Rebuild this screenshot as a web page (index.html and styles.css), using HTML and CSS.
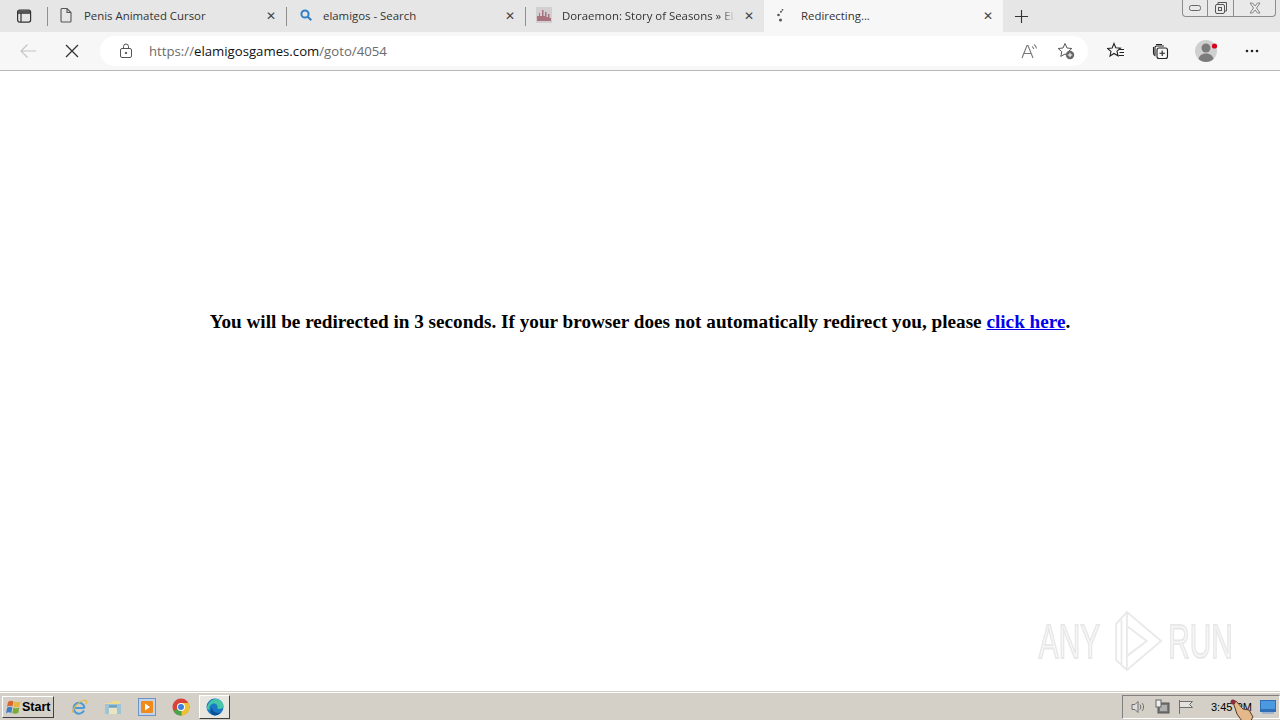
FILE: index.html
```html
<!DOCTYPE html>
<html lang="en">
<head>
	<meta charset="UTF-8" />
	<title>Redirecting...</title>
	<link rel="stylesheet" href="styles.css">
</head>
<body>
	<div class="tabstrip">
		<div class="tab-menu">
			<svg width="16" height="16" viewBox="0 0 16 16" fill="none" stroke="#333" stroke-width="1.2"><rect x="1.6" y="2.1" width="13" height="12" rx="2"/><path d="M1.6 5.2h13M5 5.2v8.9"/><path d="M2 2.6h12v2.4H2z" fill="#555" stroke="none"/></svg>
		</div>
		<div class="tab">
			<svg class="fav" width="16" height="16" viewBox="0 0 16 16" fill="none" stroke="#555" stroke-width="1.1"><path d="M3 2.5a1 1 0 0 1 1-1h5l4 4v8.500a1 1 0 0 1-1 1H4a1 1 0 0 1-1-1zM9 1.500v4h4"/></svg>
			<span class="tab-title">Penis Animated Cursor</span>
			<span class="tab-close">&#10005;</span>
		</div>
		<div class="tab">
			<svg class="fav fav-search" width="16" height="16" viewBox="0 0 16 16" fill="none" stroke="#2f7fc4" stroke-width="2"><circle cx="7" cy="7" r="3.600"/><path d="M9.800 9.800l3.500 3.500"/></svg>
			<span class="tab-title">elamigos - Search</span>
			<span class="tab-close">&#10005;</span>
		</div>
		<div class="tab">
			<svg class="fav" width="16" height="16" viewBox="0 0 16 16"><rect width="16" height="16" fill="#d3ced0"/><path d="M1 14V9h2V6h1v3h2V3h1.500v6H9V5h1.500v5H12V7h1.500v4H15v3z" fill="#a8727f"/></svg>
			<span class="tab-title tab-fade">Doraemon: Story of Seasons » ElA</span>
			<span class="tab-close">&#10005;</span>
		</div>
		<div class="tab tab-active">
			<svg class="fav" width="16" height="16" viewBox="0 0 16 16" fill="#555"><circle cx="7.500" cy="13" r="1.500"/><circle cx="5.500" cy="8" r="1.300"/><circle cx="8" cy="4.800" r="1"/><circle cx="9.500" cy="2.800" r="0.900"/></svg>
			<span class="tab-title">Redirecting...</span>
			<span class="tab-close">&#10005;</span>
		</div>
		<div class="tab-new">
			<svg width="15" height="15" viewBox="0 0 16 16" stroke="#333" stroke-width="1.200"><path d="M8 1v14M1 8h14"/></svg>
		</div>
		<div class="win-controls">
			<div class="win-btn win-min"><svg width="14" height="8" viewBox="0 0 14 8" fill="none" stroke="#666"><rect x="1.500" y="1.500" width="11" height="5" rx="2"/></svg></div>
			<div class="win-btn win-max"><svg width="14" height="14" viewBox="0 0 14 14" fill="none" stroke="#555"><rect x="1.500" y="3.500" width="9" height="9" rx="1.500"/><path d="M4 3.500V1.500h8.500v8.500h-2"/><rect x="4.500" y="6.500" width="3" height="3"/></svg></div>
			<div class="win-btn win-close"><svg width="14" height="12" viewBox="0 0 14 12" fill="none" stroke="#888"><path d="M2 1h2.500L7 4l2.500-3H12L8.500 6 12 11H9.500L7 8l-2.500 3H2l3.500-5z"/></svg></div>
		</div>
	</div>

	<div class="toolbar">
		<div class="nav-btn nav-back">
			<svg width="18" height="16" viewBox="0 0 18 16" fill="none" stroke="#c4c4c4" stroke-width="1.200"><path d="M17 8H2M8.500 1.500L2 8l6.500 6.500"/></svg>
		</div>
		<div class="nav-btn nav-stop">
			<svg width="14" height="14" viewBox="0 0 14 14" fill="none" stroke="#333" stroke-width="1.300"><path d="M1 1l12 12M13 1L1 13"/></svg>
		</div>
		<div class="urlbar">
			<svg class="lock" width="14" height="16" viewBox="0 0 14 16" fill="none" stroke="#555"><rect x="1.500" y="5.500" width="11" height="9" rx="1.500"/><path d="M4.500 5.500V3.500a2.500 2.500 0 0 1 5 0v2"/><circle cx="7" cy="10" r="0.800" fill="#555"/></svg>
			<span class="url"><span class="url-dim">https://</span>elamigosgames.com<span class="url-dim">/goto/4054</span></span>
			<svg class="url-icon" width="18" height="16" viewBox="0 0 18 16" fill="none" stroke="#777" stroke-width="1.100"><path d="M1 15L6 2.500h1L12 15M3 10.500h7"/><path d="M11 3.500c1 .5 1.500 1.300 1.700 2.500M13 1.500c1.500 1 2.300 2.300 2.500 4"/></svg>
			<svg class="url-icon url-fav" width="18" height="18" viewBox="0 0 18 18"><path d="M8 1.500l2 4.500 4.800.5-3.600 3.200 1 4.700L8 12l-4.200 2.400 1-4.700L1.200 6.500 6 6z" fill="none" stroke="#555"/><circle cx="13" cy="13" r="4.200" fill="#666"/><path d="M13 10.800v4.400M10.800 13h4.400" stroke="#fff"/></svg>
		</div>
		<div class="tool-icons">
			<svg width="18" height="18" viewBox="0 0 18 18" fill="none" stroke="#222" stroke-width="1.100"><path d="M7 1.500l1.800 4.300 4.700.4-3.500 3 1 4.600L7 11.500l-4 2.500 1-4.600-3.500-3 4.700-.4z"/><path d="M12 7.500h5M12.500 10.500h4.500M11.500 13.500h5.500"/></svg>
			<svg width="18" height="18" viewBox="0 0 18 18" fill="none" stroke="#222" stroke-width="1.100"><path d="M5 2.500h6M2.500 5v6c0 1.500.5 2.500 2 3"/><path d="M4 13V5.500A1.500 1.500 0 0 1 5.500 4H13"/><rect x="6" y="6" width="10.500" height="10.500" rx="2"/><path d="M11.200 8.500v5.500M8.500 11.200H14"/></svg>
			<div class="avatar">
				<svg width="24" height="24" viewBox="0 0 24 24"><circle cx="12" cy="12" r="11" fill="#d0d0d0"/><circle cx="12" cy="9" r="4.500" fill="#7b7b7b"/><path d="M4.500 20c1-4 4-5.500 7.500-5.500s6.500 1.500 7.500 5.500c-2 2-4.500 3-7.500 3s-5.500-1-7.500-3z" fill="#7b7b7b"/><circle cx="20.500" cy="7" r="2.600" fill="#d9001b"/></svg>
			</div>
			<svg width="14" height="4" viewBox="0 0 14 4" fill="#222"><circle cx="2" cy="2" r="1.300"/><circle cx="7" cy="2" r="1.300"/><circle cx="12" cy="2" r="1.300"/></svg>
		</div>
	</div>

	<div class="page">
		<h3 class="redirect">You will be redirected in 3 seconds. If your browser does not automatically redirect you, please <a href="#">click here</a>.</h3>
		<div class="watermark">
			<span>ANY</span>
			<svg class="wm-logo" width="90" height="62" viewBox="0 0 62 62" preserveAspectRatio="none" fill="none" stroke="#e9e9e9" stroke-width="2"><path d="M8 14L20 2l38 29-38 29-12-10z"/><path d="M14 10v44M20 2v58M20 16l22 15-22 15z"/></svg>
			<span>RUN</span>
		</div>
	</div>

	<div class="taskbar">
		<div class="start">
			<svg width="16" height="16" viewBox="0 0 16 16"><path d="M2 3c2-1.500 3.500-1.500 5.500-.5l-1 5C4.500 6.500 3 6.500 1 8z" fill="#d9662c"/><path d="M8.500 2.500c2 1 3.500 1 6 0l-1 5c-2.500 1-4 1-6 0z" fill="#e7b53a"/><path d="M1 9c2-1.500 3.500-1.500 5.300-.5l-1 5.500c-2-1-3.500-1-5.300.5z" fill="#3f7dc4"/><path d="M7.300 8.500c2 1 3.500 1 6 0l-1 5.500c-2.500 1-4 1-6 0z" fill="#7bab3a"/></svg>
			<span>Start</span>
		</div>
		<div class="quick">
			<svg width="18" height="18" viewBox="0 0 18 18" fill="none"><path d="M3.500 10H14.500M14 12.500A5.500 5.500 0 1 1 14.500 10" stroke="#4a9bd8" stroke-width="2"/><path d="M3 15C1 12 9 3 15 2c2 0 2 2 1 4" stroke="#e5b84a" stroke-width="1.200"/></svg>
			<svg width="18" height="18" viewBox="0 0 18 18"><path d="M1 5h6l1-2h8v4H1z" fill="#f0dc8e"/><rect x="1" y="6" width="16" height="10" fill="#9fc4d6"/><rect x="5" y="10" width="8" height="6" fill="#e9e4c2"/><rect x="5" y="7" width="8" height="2.500" fill="#6fa4c4"/></svg>
			<svg width="18" height="18" viewBox="0 0 18 18"><rect x="0.500" y="0.500" width="17" height="17" fill="#c3d4ea" stroke="#6f93c4"/><rect x="3" y="3" width="12" height="12" rx="1" fill="#ef8a1d"/><path d="M7 5.500l5 3.500-5 3.500z" fill="#fff"/></svg>
			<svg width="18" height="18" viewBox="0 0 18 18"><circle cx="9" cy="9" r="8.500" fill="#d9433a"/><path d="M9 9L1.500 13a8.500 8.500 0 0 0 8 4.500z" fill="#4aa24a"/><path d="M9 5h7.600a8.500 8.500 0 0 1-7 12.500z" fill="#edc232"/><circle cx="9" cy="9" r="4" fill="#fff"/><circle cx="9" cy="9" r="3" fill="#3f7fd9"/></svg>
			<div class="task-active">
				<svg width="18" height="18" viewBox="0 0 18 18"><circle cx="9" cy="9" r="8.500" fill="#1a78c4"/><path d="M1 11C1 5 6 1 10 1c4 0 7.500 3 7.500 7 0 2-2 3-4 3-1.500 0-2.500-.5-2-1.500C12 7 9 4.500 6 6c-2 1-3 3-2.500 6z" fill="#46c6a8"/><path d="M6 9.500c0 4 4 6.500 9 5-2 2-4 3-6 3-4 0-6-4-3-8z" fill="#0f4f94"/></svg>
			</div>
		</div>
		<div class="tray">
			<svg width="16" height="16" viewBox="0 0 16 16" fill="none" stroke="#6f6f6f"><path d="M2 5.500h3l3-3v11l-3-3H2z" fill="#ddd"/><path d="M10 5.500c1 1.500 1 3.500 0 5M12 4c2 2 2 6 0 8"/></svg>
			<svg width="16" height="16" viewBox="0 0 16 16"><rect x="4" y="4" width="11" height="10" fill="#777" stroke="#555"/><rect x="6" y="6" width="7" height="6" fill="#b0b0b0"/><rect x="2" y="1" width="5" height="7" fill="#eee" stroke="#666"/></svg>
			<svg width="16" height="16" viewBox="0 0 16 16" fill="none" stroke="#707070"><path d="M1.500 1v14M1.500 2.500h13l-3 3 3 3h-13" fill="#e4e2dc"/></svg>
			<span class="clock">3:45 PM</span>
			<svg class="show-desktop" width="16" height="14" viewBox="0 0 16 14"><rect width="16" height="12" fill="#2f6fb5"/><rect x="1" y="1" width="14" height="8" fill="#4b9ae0"/><rect x="2" y="12" width="12" height="2" fill="#9db5cc"/></svg>
		</div>
		<svg class="hand" width="26" height="24" viewBox="0 0 26 24"><path d="M4 3l3-1 7 8 6 1 4 7-3 5-8-1-5-7z" fill="#e3b98c" stroke="#5a3a24"/><circle cx="4" cy="3" r="2.500" fill="#8a2a3a"/></svg>
	</div>
</body>
</html>
```

FILE: styles.css
```css
html,
body {
	height: 100%;
}

body {
	margin: 0;
	display: flex;
	flex-direction: column;
	overflow: hidden;
	background-color: #fff;
	font-family: "Open Sans", "Noto Sans", sans-serif;
}

/* tabs */
.tabstrip {
	display: flex;
	height: 32px;
	background-color: #e6e6e6;
	flex: none;
}

.tab-menu {
	width: 47px;
	display: flex;
	align-items: center;
	padding-left: 16px;
	padding-bottom: 1px;
	box-sizing: border-box;
}

.tab {
	position: relative;
	width: 239px;
	display: flex;
	align-items: center;
	box-sizing: border-box;
	padding: 0 9px 2px 11px;
	font-size: 11.4px;
	color: #333;
}

/* short divider between the tabs */
.tab::before {
	content: "";
	position: absolute;
	left: 0;
	top: 7px;
	height: 19px;
	width: 1px;
	background-color: #8f8f8f;
}

.tab-active {
	background-color: #f7f7f7;
	padding-left: 9px;
}

.tab-active::before {
	display: none;
}

.tab-active .fav {
	margin-right: 12px;
}

.fav {
	flex: none;
	margin-right: 10px;
}

.fav-search {
	margin-left: 1px;
	margin-right: 9px;
}

.tab-title {
	flex: 1 1 auto;
	white-space: nowrap;
	overflow: hidden;
}

.tab-fade {
	-webkit-mask-image: linear-gradient(to right, #000 92%, transparent);
	mask-image: linear-gradient(to right, #000 92%, transparent);
}

.tab-close {
	flex: none;
	width: 12px;
	margin-left: 8px;
	font-size: 12px;
	color: #444;
	text-align: center;
}

.tab-new {
	width: 36px;
	display: flex;
	align-items: center;
	justify-content: center;
}

.win-controls {
	display: flex;
	margin-left: auto;
	margin-right: 4px;
	height: 16px;
	border: 1px solid #8c8c8c;
	border-top: 0;
	border-radius: 0 0 4px 4px;
	background-color: #e9e9e9;
}

.win-btn {
	display: flex;
	align-items: center;
	justify-content: center;
	border-left: 1px solid #8c8c8c;
}

.win-min {
	width: 24px;
	border-left: 0;
}

.win-max {
	width: 25px;
}

.win-close {
	width: 41px;
}

/* address bar */
.toolbar {
	display: flex;
	align-items: center;
	height: 38px;
	flex: none;
	background-color: #f7f7f7;
	border-bottom: 1px solid #b8b8b8;
}

.nav-btn {
	width: 44px;
	display: flex;
	justify-content: center;
}

.nav-back {
	margin-left: 6px;
}

.nav-stop {
	margin-right: 6px;
}

.urlbar {
	display: flex;
	align-items: center;
	width: 988px;
	height: 30px;
	box-sizing: border-box;
	padding: 0 13px 0 19px;
	border-radius: 15px;
	background-color: #fff;
}

.url {
	flex: 1 1 auto;
	margin-left: 16px;
	font-size: 13.2px;
	color: #111;
}

.url-dim {
	color: #6b6b6b;
}

.url-fav {
	margin-left: 18px;
}

.tool-icons {
	display: flex;
	align-items: center;
	gap: 26px;
	margin-left: 19px;
}

.avatar {
	display: flex;
	margin: 0 1px 0 -1px;
}

/* page */
.page {
	flex: 1 1 auto;
	position: relative;
	display: flex;
	justify-content: center;
	padding-top: 240px;
}

.redirect {
	margin: 0;
	font-family: "Liberation Serif", serif;
	font-size: 19.2px;
	line-height: 22px;
	color: #000;
}

.redirect a {
	color: #0000ee;
}

.watermark {
	position: absolute;
	right: 47px;
	bottom: 20px;
	display: flex;
	align-items: center;
	font-family: "Liberation Sans", sans-serif;
	font-size: 48px;
	color: #f7f7f7;
	-webkit-text-stroke: 2px #e8e8e8;
	transform: scaleX(0.62);
	transform-origin: right center;
}

.wm-logo {
	margin: 0 6px 0 14px;
}

/* windows taskbar */
.taskbar {
	position: relative;
	display: flex;
	align-items: center;
	height: 28px;
	flex: none;
	box-sizing: border-box;
	background-color: #d4d0c8;
	border-top: 1px solid #fff;
	box-shadow: 0 -1px 0 #d4d0c8;
}

.start {
	display: flex;
	align-items: center;
	gap: 0;
	height: 22px;
	width: 52px;
	box-sizing: border-box;
	margin-left: 2px;
	padding-left: 3px;
	border: 1px solid;
	border-color: #fff #404040 #404040 #fff;
	font-family: "Liberation Sans", sans-serif;
	font-weight: bold;
	font-size: 12.5px;
	color: #000;
}

.quick {
	display: flex;
	align-items: center;
	gap: 16px;
	margin-left: 16px;
}

.task-active {
	display: flex;
	align-items: center;
	justify-content: center;
	width: 31px;
	height: 24px;
	margin-left: -7px;
	box-sizing: border-box;
	background-color: #e8e6e0;
	border: 1px solid;
	border-color: #fff #404040 #404040 #fff;
}

.tray {
	display: flex;
	align-items: center;
	gap: 8px;
	height: 24px;
	margin-left: auto;
	width: 158px;
	box-sizing: border-box;
	padding-left: 7px;
	border: 1px solid;
	border-color: #808080 #fff #fff #808080;
}

.clock {
	margin-left: 9px;
	font-family: "Liberation Sans", sans-serif;
	font-size: 11px;
	color: #000;
	white-space: nowrap;
}

.show-desktop {
	margin-left: auto;
	margin-right: 3px;
}

.hand {
	position: absolute;
	right: 25px;
	top: 6px;
}
```
